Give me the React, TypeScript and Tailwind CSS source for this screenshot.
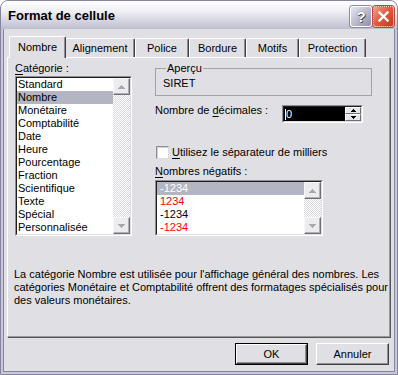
import React from "react";

const FONT = "font-['Liberation_Sans',Arial,sans-serif]";

function Tri({ up, color = "#a7a7ad", w = 7 }: { up: boolean; color?: string; w?: number }) {
  const h = Math.ceil(w / 2);
  return (
    <svg width={w} height={h} viewBox={`0 0 ${w} ${h}`} shapeRendering="crispEdges">
      <polygon points={up ? `${w / 2},0 ${w},${h} 0,${h}` : `0,0 ${w},0 ${w / 2},${h}`} fill={color} />
    </svg>
  );
}

function ScrollBtn({ up }: { up: boolean }) {
  return (
    <div className="h-[17px] w-[17px] flex items-center justify-center bg-[#ececef] border border-t-[#f8f8f8] border-l-[#f8f8f8] border-r-[#6f6f74] border-b-[#6f6f74] shadow-[inset_-1px_-1px_0_#aeaeb4]">
      <Tri up={up} />
    </div>
  );
}

function VScroll() {
  return (
    <div className="w-[17px] flex flex-col bg-[image:repeating-conic-gradient(#ffffff_0%_25%,#d9d8de_0%_50%)] bg-[length:2px_2px]">
      <ScrollBtn up />
      <div className="flex-1" />
      <ScrollBtn up={false} />
    </div>
  );
}

function Sunken({ className, inner, children }: { className: string; inner?: string; children: React.ReactNode }) {
  return (
    <div className={"border border-t-[#8e8e94] border-l-[#8e8e94] border-r-white border-b-white " + className}>
      <div className={"h-full flex border border-t-[#1e1e1e] border-l-[#1e1e1e] border-r-[#e0dfe3] border-b-[#e0dfe3] " + (inner ?? "bg-white")}>
        {children}
      </div>
    </div>
  );
}

function SpinBtn({ up }: { up: boolean }) {
  return (
    <div className="h-[7px] w-[16px] flex items-center justify-center bg-[#e6e5ea] border border-t-white border-l-white border-r-[#6f6f74] border-b-[#6f6f74]">
      <Tri up={up} color="#000000" w={5} />
    </div>
  );
}

const categories = [
  "Standard",
  "Nombre",
  "Monétaire",
  "Comptabilité",
  "Date",
  "Heure",
  "Pourcentage",
  "Fraction",
  "Scientifique",
  "Texte",
  "Spécial",
  "Personnalisée",
];

const tabs = [
  { label: "Nombre", w: "w-[57px]", active: true },
  { label: "Alignement", w: "w-[70px]" },
  { label: "Police", w: "w-[54px]" },
  { label: "Bordure", w: "w-[57px]" },
  { label: "Motifs", w: "w-[53px]" },
  { label: "Protection", w: "w-[67px]" },
];

export default function App() {
  return (
    <div className={FONT + " text-[11px] text-black w-[398px] h-[375px] flex flex-col rounded-t-[8px] overflow-hidden border border-[#85849f] bg-[#c9c8da]"}>
      {/* Title bar */}
      <div className="h-[28px] flex items-center pl-[7px] pr-[3px] bg-[linear-gradient(to_bottom,#ffffff_0%,#f0f0f5_35%,#d9d9e4_65%,#bebdd0_100%)]">
        <span className="text-[13px] font-bold leading-none text-black">Format de cellule</span>
        <div className="ml-auto flex gap-[1px] mt-[3px]">
          <div className="w-[22px] h-[21px] rounded-[3px] border border-white flex items-center justify-center bg-[linear-gradient(135deg,#e6e6ee_0%,#b9b8cc_55%,#8e8dab_100%)] shadow-[0_0_0_1px_#8b8aa6]">
            <span className="text-[15px] font-bold text-white leading-none [text-shadow:0_0_1px_#333,1px_1px_0_#555]">?</span>
          </div>
          <div className="w-[21px] h-[21px] rounded-[3px] border border-dotted border-[#ffd2c8] flex items-center justify-center bg-[linear-gradient(135deg,#f2a08c_0%,#e2583c_50%,#c63a1e_100%)] shadow-[0_0_0_1px_#b84a3c]">
            <svg width="11" height="11" viewBox="0 0 11 11">
              <path d="M1.5 1.5 L9.5 9.5 M9.5 1.5 L1.5 9.5" stroke="#ffffff" strokeWidth="2.4" strokeLinecap="square" />
            </svg>
          </div>
        </div>
      </div>

      {/* Frame area */}
      <div className="flex-1 flex flex-col px-[2px] pb-[2px]">
        <div className="flex-1 flex flex-col bg-[#e0dfe3] border-x border-b border-[#85849f] pt-[7px] pl-[3px]">
          {/* Tabs */}
          <div className="h-[21px] flex items-end pl-[2px]">
            {tabs.map((t) =>
              t.active ? (
                <div
                  key={t.label}
                  className={t.w + " h-[22px] -mb-[1px] relative z-10 bg-[#e0dfe3] flex items-center justify-center border-t border-l border-white border-r border-r-[#404040] shadow-[inset_-1px_0_0_#8e8e94] rounded-t-[2px] pb-[1px]"}
                >
                  {t.label}
                </div>
              ) : (
                <div
                  key={t.label}
                  className={t.w + " h-[19px] flex items-center justify-center border-t border-l border-white border-r border-r-[#404040] shadow-[inset_-1px_0_0_#8e8e94] rounded-t-[2px] " + (t.label === "Alignement" ? "ml-[-1px]" : "")}
                >
                  {t.label}
                </div>
              )
            )}
          </div>

          {/* Panel */}
          <div className="w-[383px] h-[280px] flex flex-col border-t border-l border-white border-r border-b border-r-[#9a9a9e] border-b-[#9a9a9e] shadow-[1px_1px_0_#555555]">
            <div className="flex pt-[4px] pl-[7px]">
              {/* Left column */}
              <div className="w-[117px] flex flex-col">
                <div className="h-[13px] leading-[13px]">
                  <span className="underline underline-offset-[2px]">C</span>atégorie :
                </div>
                <Sunken className="mt-[1px] w-[117px] h-[160px]">
                  <div className="flex-1 flex flex-col">
                    {categories.map((c) => (
                      <div
                        key={c}
                        className={"h-[13px] leading-[13px] pl-[1px] whitespace-nowrap " + (c === "Nombre" ? "bg-[#b4b5c2]" : "")}
                      >
                        {c}
                      </div>
                    ))}
                  </div>
                  <VScroll />
                </Sunken>
              </div>

              {/* Right column */}
              <div className="ml-[23px] w-[217px] flex flex-col">
                <fieldset className="w-[217px] border border-[#a3a2ab] px-[7px] pt-[2px] pb-[5px]">
                  <legend className="ml-[3px] px-[1px] leading-[13px]">Aperçu</legend>
                  <div className="leading-[13px]">SIRET</div>
                </fieldset>

                <div className="mt-[8px] flex items-start">
                  <div className="w-[127px] leading-[13px] whitespace-nowrap">
                    Nombre de <span className="underline underline-offset-[2px]">d</span>écimales :
                  </div>
                  <Sunken className="mt-[1px] w-[81px] h-[18px]" inner="bg-[#e0dfe3]">
                    <div className="flex-1 bg-black flex items-center pl-[1px]">
                      <span className="w-[1px] h-[11px] bg-white" />
                      <span className="text-white leading-[13px]">0</span>
                    </div>
                    <div className="flex flex-col">
                      <SpinBtn up />
                      <SpinBtn up={false} />
                    </div>
                  </Sunken>
                </div>

                <div className="mt-[23px] flex items-center ml-[1px]">
                  <div className="w-[13px] h-[13px] bg-white border border-t-[#8e8e94] border-l-[#8e8e94] border-r-[#dcdce0] border-b-[#dcdce0] shadow-[inset_1px_1px_0_#d0d0d6]" />
                  <div className="ml-[3px] leading-[13px] whitespace-nowrap">
                    <span className="underline underline-offset-[2px]">U</span>tilisez le séparateur de milliers
                  </div>
                </div>

                <div className="mt-[6px] h-[13px] leading-[13px]">
                  <span className="underline underline-offset-[2px]">N</span>ombres négatifs :
                </div>
                <Sunken className="mt-[2px] w-[168px] h-[56px]">
                  <div className="flex-1 flex flex-col">
                    <div className="h-[13px] leading-[13px] pl-[3px] bg-[#b4b5c2] text-white">-1234</div>
                    <div className="h-[13px] leading-[13px] pl-[3px] text-[#ff0000]">1234</div>
                    <div className="h-[13px] leading-[13px] pl-[3px]">-1234</div>
                    <div className="h-[13px] leading-[13px] pl-[3px] text-[#ff0000]">-1234</div>
                  </div>
                  <VScroll />
                </Sunken>
              </div>
            </div>

            <p className="mt-[32px] pl-[6px] leading-[13px] whitespace-nowrap">
              La catégorie Nombre est utilisée pour l'affichage général des nombres. Les
              <br />
              catégories Monétaire et Comptabilité offrent des formatages spécialisés pour
              <br />
              des valeurs monétaires.
            </p>
          </div>

          {/* Buttons */}
          <div className="mt-[6px] flex justify-end gap-[8px] pr-[5px]">
            <div className="w-[73px] h-[22px] border border-black">
              <div className="h-full flex items-center justify-center border border-t-white border-l-white border-r-[#404040] border-b-[#404040] shadow-[inset_-1px_-1px_0_#8e8e94]">
                OK
              </div>
            </div>
            <div className="w-[73px] h-[22px] flex items-center justify-center border border-t-white border-l-white border-r-[#404040] border-b-[#404040] shadow-[inset_-1px_-1px_0_#8e8e94]">
              Annuler
            </div>
          </div>
        </div>
      </div>
    </div>
  );
}
